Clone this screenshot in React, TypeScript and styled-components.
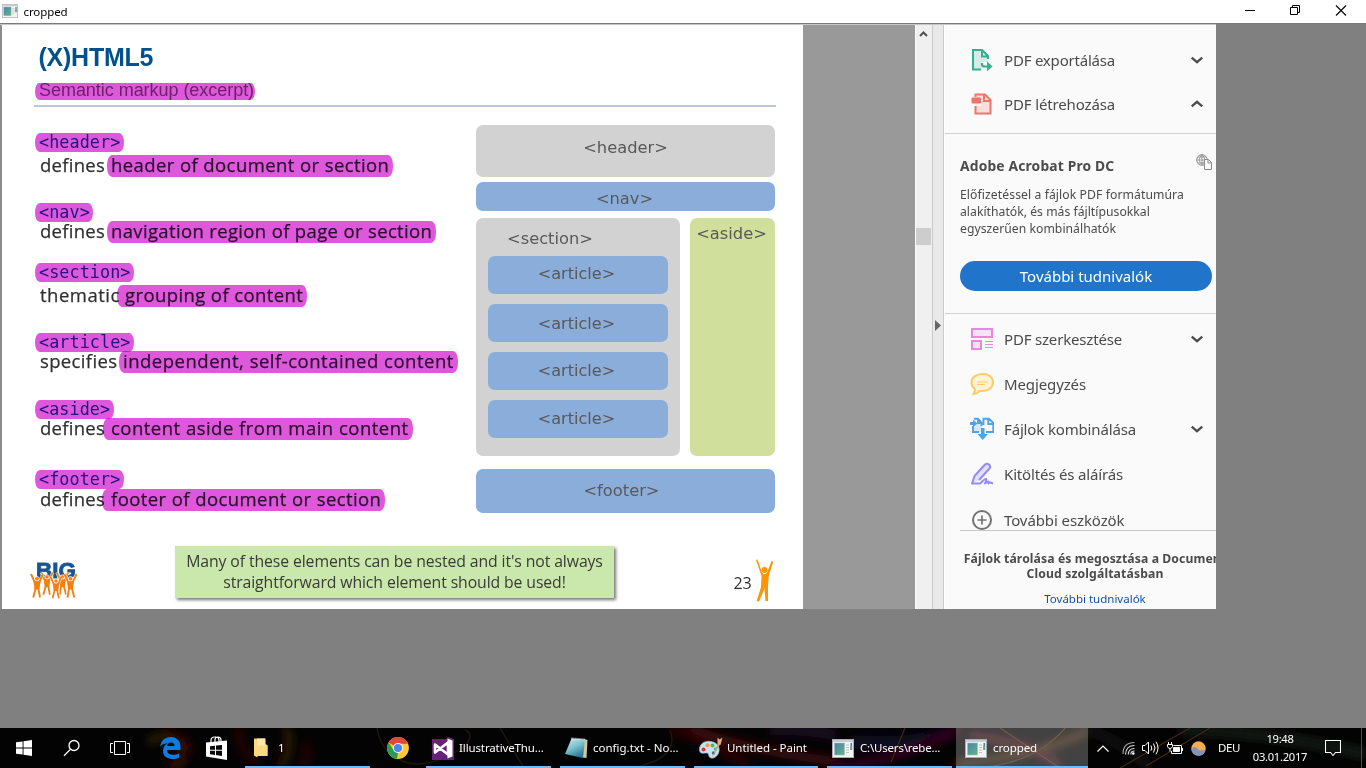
import React from "react";
import styled, { createGlobalStyle } from "styled-components";

const ui = `"Noto Sans", "Open Sans", sans-serif`;
const slideFont = `"Open Sans", "Noto Sans", sans-serif`;

const Global = createGlobalStyle`
  * { box-sizing: border-box; }
  body { margin: 0; width: 1366px; height: 768px; overflow: hidden; background: #808080; font-family: ${ui}; }
`;

const Screen = styled.div`
  width: 1366px; height: 768px; display: flex; flex-direction: column; overflow: hidden; background: #808080;
`;
const TitleBar = styled.header`
  height: 23px; flex: none; background: #fff; display: flex; align-items: center; padding-left: 2px;
  > svg { margin-top: -2px; }
`;
const Caption = styled.span`
  font: 11.5px/22px ${ui}; color: #000; margin-left: 5.5px; letter-spacing: -0.1px; white-space: nowrap;
`;
const WindowButtons = styled.div`
  margin-left: auto; display: flex; height: 23px; svg { width: 46px; height: 23px; display: block; }
`;
const Client = styled.main`
  flex: 1; border-top: 1px solid #7a7a7a; min-height: 0;
`;
const Doc = styled.div`
  width: 1216px; height: 585px; display: flex; border-top: 1px solid #c6c6c6; overflow: hidden;
`;
const Slide = styled.section`
  width: 803px; flex: none; background: #fff; border-left: 2px solid #8c8c8c; padding-left: 33px;
  display: flex; flex-direction: column; font-family: ${slideFont};
`;
const Backdrop = styled.div`width: 112px; flex: none; background: #999;`;
const Scrollbar = styled.div`
  width: 17px; flex: none; background: #f0f0f0; border-left: 1px solid #fbfbfb;
  display: flex; flex-direction: column; svg { display: block; }
`;
const Thumb = styled.div`height: 17px; margin-top: 187px; width: 15px; background: #cdcdcd;`;
const Splitter = styled.div`
  width: 12px; flex: none; background: #e9e9e9; border-left: 1px solid #cacaca; border-right: 1px solid #cacaca;
  display: flex; align-items: flex-start; padding: 295px 0 0 2px;
`;

const Title = styled.h1`
  margin: 17px 0 0 3.5px; font: bold 25px/30px "Liberation Sans", Arial, sans-serif; color: #00528f; letter-spacing: -0.25px; height: 31px;
`;
const Mark = styled.span<{ $w: number; $h: number; $lh?: number; $pl?: number; $ls?: number }>`
  display: block; flex: none; white-space: nowrap; width: ${p => p.$w}px; height: ${p => p.$h}px; line-height: ${p => p.$lh ?? p.$h - 2}px;
  padding-left: ${p => p.$pl ?? 4}px; letter-spacing: ${p => p.$ls ?? 0}px;
  background: #de58dc; border-radius: 5px / 10px; mix-blend-mode: multiply;
`;
const Subtitle = styled.div`
  margin-top: 10px; font: 18px/17px "Liberation Sans", Arial, sans-serif; color: #6b2367;
`;
const Rule = styled.div`width: 742px; height: 2px; margin: 5px 0 0 -1px; background: #bcc8d6;`;
const Body = styled.div`display: flex; height: 412px; flex: none;`;
const Terms = styled.div`width: 441px; flex: none; padding-top: 26px; display: flex; flex-direction: column;`;
const Term = styled.div<{ $h: number; $gap: number }>`
  height: ${p => p.$h}px; flex: none; display: flex; flex-direction: column; gap: ${p => p.$gap}px;
`;
const Tag = styled.div`
  height: 18px; font: 16.8px/18px "DejaVu Sans Mono", monospace; color: #23127f;
`;
const Desc = styled.div`
  display: flex; height: 22px; font-size: 18.5px; color: #2a0f2c; padding-left: 5px; -webkit-text-stroke: 0.25px;
`;
const Plain = styled.span<{ $w: number; $ls: number }>`
  flex: none; width: ${p => p.$w}px; line-height: 20px; color: #303030; white-space: nowrap; letter-spacing: ${p => p.$ls}px;
`;

const Diagram = styled.div`
  width: 299px; flex: none; padding-top: 18px; font: 16.3px/20px "DejaVu Sans", Verdana, sans-serif; color: #595959;
`;
const tones = { grey: "#d2d2d2", blue: "#8badd9", green: "#d0df9b" };
const Block = styled.div<{ $tone: keyof typeof tones; $h: number; $pt: number; $mt?: number; $w?: number; $pr?: number }>`
  background: ${p => tones[p.$tone]}; height: ${p => p.$h}px; padding: ${p => p.$pt}px ${p => p.$pr ?? 0}px 0 0; margin-top: ${p => p.$mt ?? 0}px;
  ${p => p.$w ? `width: ${p.$w}px;` : ""}
  border-radius: 7px; text-align: center; flex: none;
`;
const Columns = styled.div`display: flex; gap: 10px; margin-top: 7px;`;
const SectionLabel = styled.div`height: 20px; padding-right: 56px;`;
const Articles = styled.div`display: flex; flex-direction: column; gap: 10px; padding: 7px 12px 0; font-size: 16.1px;`;

const SlideFooter = styled.footer`display: flex; align-items: flex-start; height: 66px;`;
const LogoBox = styled.div`width: 47px; margin: 40px 0 0 -5px; flex: none; svg { display: block; }`;
const Callout = styled.div`
  width: 439px; height: 52px; margin: 27px 0 0 98px; padding-top: 5px; flex: none; background: #cae8ab; box-shadow: 2px 2px 3px #777;
  color: #3a3a3a; font-size: 15.8px; line-height: 21px; text-align: center; white-space: nowrap; letter-spacing: -0.11px;
`;
const PageNo = styled.div`
  font-size: 16px; line-height: 20px; color: #303030; margin: 54px 0 0 119.5px; width: 21.5px; flex: none; letter-spacing: -0.2px;
`;
const Mascot = styled.svg`display: block; margin-top: 40px; flex: none;`;

const Panel = styled.aside`
  flex: 1; background: #fafafa; border-left: 1px solid #fff; min-width: 0; overflow: hidden; color: #4b4b4b;
`;
const ToolRow = styled.div<{ $h: number }>`
  height: ${p => p.$h}px; display: flex; align-items: center; padding-left: 25px;
  > svg { flex: none; display: block; }
`;
const ToolName = styled.span<{ $ls: number }>`
  font-size: 15px; line-height: 20px; width: 187px; margin-left: 10px; white-space: nowrap; letter-spacing: ${p => p.$ls}px;
`;
const ToolGroup = styled.div<{ $pt: number; $h: number; $line?: boolean }>`
  padding-top: ${p => p.$pt}px; height: ${p => p.$h}px; border-bottom: ${p => p.$line ? "1px solid #d0d0d0" : "0"};
`;
const Promo = styled.div`height: 180px; padding: 22px 0 0 15px; border-bottom: 1px solid #d0d0d0;`;
const PromoHead = styled.div`
  display: flex; height: 20px; svg { margin-top: -2px; }
  b { font-size: 13.8px; line-height: 20px; width: 236px; white-space: nowrap; letter-spacing: 0.18px; }
`;
const PromoText = styled.p`margin: 10px 0 0; font-size: 12.2px; line-height: 17px; white-space: nowrap; height: 51px;`;
const PromoLine = styled.span<{ $ls: number }>`display: block; letter-spacing: ${p => p.$ls}px;`;
const Button = styled.button`
  display: block; margin: 24px 0 0; width: 252px; height: 30px; border: 0; border-radius: 15px; background: #2074ca; color: #fff;
  font: 15px/28px ${ui}; padding: 0;
`;
const Cloud = styled.div`
  margin-left: 15px; width: 270px; border-top: 1px solid #c8c8c8; padding-top: 20px; text-align: center; white-space: nowrap;
  font-size: 12.2px; line-height: 15px; font-weight: bold; position: relative;
`;
const CloudLine = styled.div<{ $ls: number }>`letter-spacing: ${p => p.$ls}px;`;
const CloudLink = styled.a`display: block; margin-top: 10px; font-size: 11.5px; font-weight: normal; color: #0d54a5;`;

const Taskbar = styled.nav`
  height: 40px; flex: none; display: flex; position: relative; color: #fff; overflow: hidden; background: #040303;
`;
const WallpaperLayer = styled.svg`position: absolute; inset: 0; width: 1366px; height: 40px;`;
const Slot = styled.div<{ $w: number }>`
  width: ${p => p.$w}px; flex: none; display: flex; align-items: center; justify-content: center; position: relative; height: 40px;
  svg { display: block; }
`;
const Task = styled.div<{ $w: number; $ml?: number; $active?: boolean; $pl?: number; $gap?: number }>`
  width: ${p => p.$w}px; margin-left: ${p => p.$ml ?? 0}px; padding: 2px 0 0 ${p => p.$pl ?? 5}px; flex: none; height: 40px; position: relative;
  border-bottom: 2px solid #76b9ed; display: flex; align-items: center; gap: ${p => p.$gap ?? 5}px;
  background: ${p => p.$active ? "rgba(255,255,255,.25)" : "transparent"};
  svg { display: block; flex: none; }
`;
const TaskLabel = styled.span<{ $ls?: number }>`
  font-size: 11.5px; line-height: 20px; white-space: nowrap; letter-spacing: ${p => p.$ls ?? -0.08}px;
`;
const Clock = styled.div`
  width: 64px; flex: none; text-align: center; font-size: 11.2px; line-height: 18px; padding-top: 2px; position: relative; letter-spacing: -0.28px;
`;
const ShowDesktop = styled.div`width: 1px; height: 40px; margin-left: 7px; background: #4c4c4c; position: relative;`;

const AppIcon = ({ w = 22, h = 19 }: { w?: number; h?: number }) => (
  <svg width={w} height={h} viewBox="0 0 22 19">
    <defs><linearGradient id="scr" x1="0" y1="0" x2="1" y2="1"><stop offset="0" stopColor="#4b82b4" /><stop offset="1" stopColor="#62b57e" /></linearGradient></defs>
    <rect x=".5" y=".5" width="21" height="18" fill="#f4f4f4" stroke="#a9adb1" />
    <rect x="1" y="1" width="20" height="2" fill="#c9ced4" />
    <rect x="2.5" y="4" width="10" height="12" fill="url(#scr)" stroke="#a9b8bd" strokeWidth=".6" />
    <path d="M14 6h3M14 8.500h3M14 11h3M14 13.500h3" stroke="#c0c0c0" />
    <rect x="18.500" y="4" width="1.600" height="7" fill="#4a78b8" /><rect x="18.500" y="7" width="1.600" height="4" fill="#5fb06f" />
  </svg>
);
const Chevron = ({ up }: { up?: boolean }) => (
  <svg width="12" height="8" viewBox="0 0 12 8"><path d={up ? "M.7 6.300 6 1.800 11.300 6.300" : "M.7 1.700 6 6.200 11.300 1.700"} fill="none" stroke="#4b4b4b" strokeWidth="2.300" /></svg>
);
const ExportIcon = () => (
  <svg width="24" height="24" viewBox="0 0 24 24"><path d="M3 2h9.500l6 6v6H12v8H3z" fill="#d5ece6" /><path d="M18 11V8l-6-6H3v19.500h8M12 2v6.500h6" fill="none" stroke="#35ae92" strokeWidth="2" /><path d="M12 15v1.500q0 2 3 2h2.500" fill="none" stroke="#35ae92" strokeWidth="2.200" /><path d="M17 13.500l5.500 5-5.500 4.700z" fill="#35ae92" /></svg>
);
const CreateIcon = () => (
  <svg width="24" height="24" viewBox="0 0 24 24"><path d="M6 2.500h9.500L21 8v13.500H6z" fill="#f8dedb" /><path d="M5.500 5V2.500h9.500L20.500 8v13.500h-15V14M14 2.500V9h6.500" fill="none" stroke="#ef756b" strokeWidth="2" /><rect x="6.600" y="11" width="5" height="3" fill="#fafafa" /><rect x="1.500" y="5.500" width="9.500" height="6" rx="1" fill="#ef756b" /></svg>
);
const EditIcon = () => (
  <svg width="24" height="24" viewBox="0 0 24 24" fill="#f8e0f5" stroke="#ec86dc"><rect x="2" y="2" width="20" height="8" strokeWidth="2" /><rect x="2" y="14" width="9" height="8" strokeWidth="2" /><path d="M15 14.500h8M15 17.500h8M15 20.500h8" strokeWidth="1" /></svg>
);
const CommentIcon = () => (
  <svg width="24" height="24" viewBox="0 0 24 24"><path d="M12.500 2C6 2 1.500 5.500 1.500 10.500c0 3 1.500 5 3.500 6.500 0 2-.7 3.500-1.500 5 2.500-.3 5-1.500 6-3 8 .8 13.500-3 13.500-8.500S18.500 2 12.500 2z" fill="#fff3d3" stroke="#fdcb6a" strokeWidth="2" /><path d="M7 10h11M7 12.500h8" stroke="#fdcb6a" /></svg>
);
const CombineIcon = () => (
  <svg width="24" height="24" viewBox="0 0 24 24"><path d="M4 6h8v9H4z" fill="#d4e8f9" /><path d="M3 9v6h6M4 1.700h4l3.500 4V9M8 2v4h4M13.500 8V1.700h5.500L23.300 6v9H16M18.300 2v5h5" fill="none" stroke="#4fa3e6" strokeWidth="1.900" /><path d="M0 5h3V2.500L7.500 6.500 3 10V8H0zM11 11h3.500v6H18L12.700 23 7.500 17H11z" fill="#4fa3e6" /></svg>
);
const SignIcon = () => (
  <svg width="24" height="24" viewBox="0 0 24 24"><path d="M2 21.500 4.500 14 14.500 2.800q2-1.800 4 0 2 2 .5 4L9.500 18z" fill="#e3defd" /><path d="M9 18 19.500 6.500q1.500-2-.5-4-2-1.500-4 0L4.500 14 2 21.500h8q5-5 6-4.500t-1 4.500q3-2.500 3.500-2t0 2q2-1.500 2.500-1t2 1" fill="none" stroke="#958cf3" strokeWidth="2" strokeLinejoin="round" /></svg>
);
const MoreIcon = () => (
  <svg width="24" height="24" viewBox="0 0 24 24" fill="none" stroke="#737373"><circle cx="12" cy="12" r="9" strokeWidth="2" /><path d="M7.500 12h9M12 7.500v9" strokeWidth="1.700" /></svg>
);
const GlobeDoc = () => (
  <svg width="16" height="16" viewBox="0 0 16 16" fill="none" stroke="#8b8b8b" strokeWidth="1"><circle cx="6" cy="6" r="5.300" /><path d="M.7 6h10.500M2 3h8M2 9h6M6 .7v10M6 .7q-5.500 5 0 10M6 .7q5.500 5 0 10" strokeWidth=".8" /><path d="M8.500 5.500h4l3 3v7h-7z" fill="#fafafa" /><path d="M12 5.500v3.500h3.500" /></svg>
);

const Person = ({ x, y, s, color = "#f57f17" }: { x: number; y: number; s: number; color?: string }) => (
  <g transform={`translate(${x} ${y}) scale(${s})`} fill={color}><circle cx="8.500" cy="11" r="3" /><path d="M0 1 1.500.5 6 13.500Q8.500 17 11 13.500L15.500 2l1.700.8L12.800 17l-.8 10.500L12 42h-2.500L8.500 29.500 3 42.500.7 42 5 28 5.500 17z" /></g>
);
const Fan = ({ x, y, s = 1, flip }: { x: number; y: number; s?: number; flip?: boolean }) => (
  <g transform={`translate(${x} ${y}) scale(${flip ? -s : s} ${s})`}>
    <path d="M-6-9-2.500-1 2.500-1 6-9M-1.500 5-4 14.500M1.500 5 3.500 14.500" fill="none" stroke="#fff" strokeWidth="3.200" opacity=".7" />
    <path d="M-6-9-2.300-1M6-9 2.300-1M-1.300 5-3.800 14.500M1.300 5 3 14.500" fill="none" stroke="#f58011" strokeWidth="1.900" />
    <path d="M-3.600-2h7.200L2.400 6.500h-4.800z" fill="#f58011" />
    <circle cx="0" cy="-4.300" r="2.200" fill="#f58011" stroke="#fff" strokeWidth=".7" />
  </g>
);
const BigLogo = () => (
  <svg width="47" height="40" viewBox="0 0 47 40">
    <text x="6" y="18.500" fontFamily="Liberation Sans" fontWeight="bold" fontSize="21.500" textLength="40" lengthAdjust="spacingAndGlyphs" fill="#1a5591" stroke="#1a5591" strokeWidth=".8">BIG</text>
    <Fan x={17} y={22} s={.95} /><Fan x={32.500} y={22} s={.95} flip />
    <Fan x={7} y={24} /><Fan x={40.500} y={24} flip /><Fan x={26} y={26} s={.92} />
  </svg>
);

const StartIcon = () => (
  <svg width="16" height="16" viewBox="0 0 16 16" fill="#fff"><path d="M0 2.300 6.600 1.400v6.200H0zM7.500 1.200 16 0v7.600H7.500zM0 8.400h6.600v6.200L0 13.700zM7.500 8.400H16V16l-8.500-1.200z" /></svg>
);
const SearchIcon = () => (
  <svg width="18" height="18" viewBox="0 0 18 18" fill="none" stroke="#fff" strokeWidth="1.300"><circle cx="11" cy="6.500" r="5" /><path d="M7.500 10.200 1 16.700" /></svg>
);
const TaskViewIcon = () => (
  <svg width="20" height="14" viewBox="0 0 20 14" fill="none" stroke="#fff"><path d="M4.500.5h11v13h-11zM3 2.500H.5v9H3M17 2.500h2.500v9H17" /></svg>
);
const EdgeIcon = () => (
  <svg width="21" height="22" viewBox="0 0 21 22"><path d="M0 10C1 3.500 5 0 11 0c6 0 9.500 4.500 9.500 9.500V13H7c.2 3.500 3.200 4.800 6.200 4.800 2.300 0 4.300-.6 6-1.600v4.300C17.300 21.500 15 22 12.300 22 6 22 3 18.500 3 13.800c0-3.300 1.800-6 4.700-7.500C4.500 6.300 1.500 7.500 0 10zM7.200 9h7.300c0-2.300-1.200-3.600-3.500-3.600S7.500 6.800 7.200 9z" fill="#0f7bdc" /></svg>
);
const StoreIcon = () => (
  <svg width="22" height="24" viewBox="0 0 22 24"><path d="M5 7V4q0-2.500 3-3h2q3 .5 3 3v2M9 6V3q.5-2 3-2 3 .3 3 3v1" fill="none" stroke="#fff" strokeWidth="1.200" /><path d="M0 6.500 21 4.500V24L0 20.500z" fill="#fff" /><path d="M4 10.300l5-.6V13.800H4zM10 9.600l6-.7v4.900h-6zM4 14.800h5v4.200l-5-.7zM10 14.800h6v5.100l-6-.8z" fill="#0a0a0a" /></svg>
);
const FolderIcon = () => (
  <svg width="15" height="20" viewBox="0 0 15 20"><path d="M1 .5h11V6l2.500 1v10.500H1z" fill="#f2c75c" /><path d="M4 .5h8.500v12.500H4z" fill="#ffe9a6" /><path d="M1 .5 4.500 3v16.500L1 17.500zM4.500 7.500h10v10.500h-10z" fill="#fbd980" /></svg>
);
const ChromeIcon = () => (
  <svg width="22" height="22" viewBox="0 0 22 22"><circle cx="11" cy="11" r="10.900" fill="#fcc934" /><path d="M11 11 1.560 5.550A10.900 10.900 0 0 1 20.440 5.550L20.800 6.200H11z" fill="#e0483a" /><path d="M1.560 5.550 6.800 13.300 11 15.800 10 21.850A10.900 10.900 0 0 1 1.560 5.550z" fill="#2c9b52" /><path d="M11 6.200h9.800" stroke="#e0483a" /><circle cx="11" cy="11" r="5" fill="#fff" /><circle cx="11" cy="11" r="4.100" fill="#4a86ec" /></svg>
);
const VsIcon = () => (
  <svg width="22" height="23" viewBox="0 0 22 23"><path d="M0 2h14l2-2 6 2v21H0z" fill="#68217a" /><path d="M3 7.500 16 17.500V5.500L3 15.500z" fill="none" stroke="#fff" strokeWidth="2.600" strokeLinejoin="round" /><path d="m15.500 1.500 5 2v16l-5 2z" fill="#fff" /></svg>
);
const NotepadIcon = () => (
  <svg width="23" height="22" viewBox="0 0 23 22"><defs><linearGradient id="np" x1="0" y1="0" x2=".5" y2="1"><stop offset="0" stopColor="#d4eff5" /><stop offset=".55" stopColor="#79bfcd" /><stop offset="1" stopColor="#287d93" /></linearGradient></defs><path d="m19 2 3.500 1-1 18-4-.5z" fill="#d6c69b" /><path d="M6.500 1.500 20 2.500 18 21 0 17z" fill="url(#np)" /><path d="M6.500 1.500 20 2.500" stroke="#e5eced" strokeWidth="2" strokeDasharray="1 1" /></svg>
);
const PaintIcon = () => (
  <svg width="24" height="23" viewBox="0 0 24 23"><path d="M.5 13C0 7 6 3 12 4.500c6 1 9 5 8 10s-6 8-9 6c-2-1.500-.5-4-3-4.500C5 15.500 1 18 .5 13z" fill="#c9e3f3" stroke="#8bb4cf" strokeWidth=".7" /><circle cx="4.500" cy="12.500" r="2" fill="#cf3c2d" /><circle cx="8.500" cy="8.300" r="2" fill="#e9a137" /><circle cx="13.500" cy="8.500" r="2" fill="#61b244" /><circle cx="16.500" cy="12" r="1.800" fill="#47aee0" /><circle cx="14.500" cy="16" r="1.800" fill="#4268ae" /><path d="M12 22.500 19 6.500l2 1z" fill="#e99a3e" /><path d="M18.500 7.500 18.500.5l2 2 3-2L21.500 8z" fill="#d9ad7c" /></svg>
);
const TrayChevron = () => <svg width="12" height="7" viewBox="0 0 12 7"><path d="M.5 6.500 6 1l5.500 5.500" fill="none" stroke="#fff" strokeWidth="1.200" /></svg>;
const WifiIcon = () => (
  <svg width="13" height="14" viewBox="0 0 13 14" fill="none" stroke="#ddd" strokeWidth="1.100"><path d="M1 13Q1 1.500 12.500 1.500" opacity=".75" /><path d="M3.500 13.500Q4 4.500 12.500 4.500M6.300 13.500Q6.500 7.500 12.500 7.500M8.800 13.500q0-3.500 3.700-3.500" /><circle cx="11.300" cy="12.500" r="1.300" fill="#fff" stroke="none" /></svg>
);
const SpeakerIcon = () => (
  <svg width="17" height="14" viewBox="0 0 17 14" fill="none" stroke="#fff"><path d="M.5 4.500H3l3.500-3.500v12L3 9.500H.5zM9 4.500q1.500 2.500 0 5M11.500 2.500q3 4.500 0 9M14 .7q4 6.300 0 12.600" /></svg>
);
const BatteryIcon = () => (
  <svg width="16" height="13" viewBox="0 0 16 13" fill="none" stroke="#fff"><path d="M6.500 3.500h8v8h-10V9M15.500 6v3M1.500 0v3M4.500 0v3M.5 2.500h5v2q-.5 2-2.500 2t-2.500-2zM3 6.500v3" /><path d="M6.500 5.500h6v4h-6z" fill="#fff" /></svg>
);
const WeatherIcon = () => (
  <svg width="15" height="15" viewBox="0 0 15 15"><circle cx="7.500" cy="7.500" r="7.200" fill="#f4ae4d" /><path d="M.4 8.500Q2.500 5 5.500 6.500q2 3.500 5 2.800 2.500-.8 4 .2A7.200 7.200 0 0 1 .4 8.500z" fill="#8792b8" /></svg>
);
const NoticeIcon = () => <svg width="16" height="17" viewBox="0 0 16 17"><path d="M.5.500h15v12h-5l-2.500 3-2.500-3h-5z" fill="none" stroke="#fff" strokeWidth="1.100" /></svg>;

const Wallpaper = () => (
  <WallpaperLayer viewBox="0 0 1366 40" fill="none">
    <defs><filter id="soft" x="-20%" y="-50%" width="140%" height="200%"><feGaussianBlur stdDeviation="4" /></filter></defs>
    <g filter="url(#soft)">
      <path d="M148 14q22-12 32 2t-8 24" stroke="#2e2205" strokeWidth="7" />
      <path d="M165 3q28 12 22 20t-18 14" stroke="#360404" strokeWidth="6" />
      <path d="M240 0q-5 22 20 35M285 0q8 22-8 40M300 40q14-20 2-22" stroke="#2a0505" strokeWidth="7" />
      <path d="M287 0q8 20-6 40" stroke="#2b2105" strokeWidth="5" />
      <path d="M670 0q50 16 80 40" stroke="#2c0505" strokeWidth="10" /><path d="M690 0q60 24 150 34" stroke="#3a070a" strokeWidth="9" />
      <path d="M770 2q50 0 66 6" stroke="#1e0c22" strokeWidth="10" /><path d="M850 14q60 4 100-8" stroke="#0c0722" strokeWidth="14" />
      <path d="M830 40q70-6 130-40" stroke="#35061f" strokeWidth="8" />
      <path d="M956 36q80-8 130-32" stroke="#4a2b0c" strokeWidth="6" /><path d="M970 8q60 6 90 30" stroke="#3d0f14" strokeWidth="9" />
      <path d="M1084 0q40 14 66 40" stroke="#1e1e1e" strokeWidth="5" /><path d="M1180 2q80 0 186 24" stroke="#161a18" strokeWidth="10" />
    </g>
    <path d="M377 0q4 26 28 34t60-16q10-12 0-16M500 0l24 40M640 38q40-10 30-36" stroke="#1f1706" strokeWidth="1.500" />
    <path d="M905 0l-14 34M1120 40l70-40M1146 38l64-38M975 40q60-4 90-40M1000 0l60 40" stroke="#3f2810" strokeWidth="1.200" />
  </WallpaperLayer>
);

const terms = [
  { tag: "<header>", tw: 89, h: 70, gap: 4, plain: "defines", pls: 0.28, pw: 67, pl: 4, text: "header of document or section", w: 286, ls: 0.41 },
  { tag: "<nav>", tw: 58, h: 60, gap: 0, plain: "defines", pls: 0.28, pw: 67, pl: 4, text: "navigation region of page or section", w: 329, ls: 0.35 },
  { tag: "<section>", tw: 99, h: 70, gap: 4, plain: "thematic", pls: 0.5, pw: 77, pl: 8, text: "grouping of content", w: 190, ls: 0.4 },
  { tag: "<article>", tw: 99, h: 67, gap: 0, plain: "specifies", pls: 0.35, pw: 79, pl: 4, text: "independent, self-contained content", w: 339, ls: 0.51 },
  { tag: "<aside>", tw: 79, h: 70, gap: 0, plain: "defines", pls: 0.28, pw: 63, pl: 8, text: "content aside from main content", w: 310, ls: 0.48 },
  { tag: "<footer>", tw: 89, h: 50, gap: 1, plain: "defines", pls: 0.28, pw: 62, pl: 9, text: "footer of document or section", w: 283, ls: 0.42 },
];

export default function App() {
  return (
    <Screen>
      <Global />
      <TitleBar>
        <AppIcon w={16} h={14} /><Caption>cropped</Caption>
        <WindowButtons>
          <svg viewBox="0 0 46 23"><path d="M17 10.500h10" stroke="#000" /></svg>
          <svg viewBox="0 0 46 23" fill="none" stroke="#000"><path d="M16.500 7.500h7v7h-7zM18.500 7.500v-2h7v7h-2" /></svg>
          <svg viewBox="0 0 46 23"><path d="m16 5.500 10 10m0-10-10 10" stroke="#000" strokeWidth="1.100" /></svg>
        </WindowButtons>
      </TitleBar>
      <Client>
        <Doc>
          <Slide>
            <Title>(X)HTML5</Title>
            <Subtitle><Mark $w={220} $h={17} $ls={-0.04}>Semantic markup (excerpt)</Mark></Subtitle>
            <Rule />
            <Body>
              <Terms>
                {terms.map(t => (
                  <Term key={t.tag} $h={t.h} $gap={t.gap}>
                    <Tag><Mark $w={t.tw} $h={19} $lh={19} $ls={0.06}>{t.tag}</Mark></Tag>
                    <Desc>
                      <Plain $w={t.pw} $ls={t.pls}>{t.plain}</Plain>
                      <Mark $w={t.w} $h={22} $pl={t.pl} $ls={t.ls}>{t.text}</Mark>
                    </Desc>
                  </Term>
                ))}
              </Terms>
              <Diagram>
                <Block $tone="grey" $h={52} $pt={13}>{"<header>"}</Block>
                <Block $tone="blue" $h={29} $pt={7} $mt={5} $pr={2}>{"<nav>"}</Block>
                <Columns>
                  <Block $tone="grey" $h={238} $pt={11} $w={204}>
                    <SectionLabel>{"<section>"}</SectionLabel>
                    <Articles>
                      {[8, 10, 9, 9].map((pt, i) => <Block key={i} $tone="blue" $h={38} $pt={pt} $pr={3}>{"<article>"}</Block>)}
                    </Articles>
                  </Block>
                  <Block $tone="green" $h={238} $pt={6} $w={85} $pr={2}>{"<aside>"}</Block>
                </Columns>
                <Block $tone="blue" $h={44} $pt={12} $mt={13} $pr={8}>{"<footer>"}</Block>
              </Diagram>
            </Body>
            <SlideFooter>
              <LogoBox><BigLogo /></LogoBox>
              <Callout>
                <div>Many of these elements can be nested and it's not always</div>
                <div>straightforward which element should be used!</div>
              </Callout>
              <PageNo>23</PageNo>
              <Mascot width="20" height="44" viewBox="0 0 20 44"><Person x={1} y={0} s={1} color="#fb9704" /></Mascot>
            </SlideFooter>
          </Slide>
          <Backdrop />
          <Scrollbar>
            <svg width="16" height="16" viewBox="0 0 16 16"><path d="M4 11 7.500 7.500 11 11" fill="none" stroke="#505050" strokeWidth="2" /></svg>
            <Thumb />
          </Scrollbar>
          <Splitter><svg width="7" height="12" viewBox="0 0 7 12"><path d="M0 0v11l6-5.500z" fill="#666" /></svg></Splitter>
          <Panel>
            <ToolGroup $pt={13} $h={109} $line>
              <ToolRow $h={44}><ExportIcon /><ToolName $ls={-0.2}>PDF exportálása</ToolName><Chevron /></ToolRow>
              <ToolRow $h={44}><CreateIcon /><ToolName $ls={-0.14}>PDF létrehozása</ToolName><Chevron up /></ToolRow>
            </ToolGroup>
            <Promo>
              <PromoHead><b>Adobe Acrobat Pro DC</b><GlobeDoc /></PromoHead>
              <PromoText>
                <PromoLine $ls={0.08}>Előfizetéssel a fájlok PDF formátumúra</PromoLine>
                <PromoLine $ls={0.02}>alakíthatók, és más fájltípusokkal</PromoLine>
                <PromoLine $ls={0.03}>egyszerűen kombinálhatók</PromoLine>
              </PromoText>
              <Button>További tudnivalók</Button>
            </Promo>
            <ToolGroup $pt={2} $h={216}>
              <ToolRow $h={45}><EditIcon /><ToolName $ls={-0.18}>PDF szerkesztése</ToolName><Chevron /></ToolRow>
              <ToolRow $h={45}><CommentIcon /><ToolName $ls={-0.12}>Megjegyzés</ToolName></ToolRow>
              <ToolRow $h={45}><CombineIcon /><ToolName $ls={-0.15}>Fájlok kombinálása</ToolName><Chevron /></ToolRow>
              <ToolRow $h={45}><SignIcon /><ToolName $ls={-0.16}>Kitöltés és aláírás</ToolName></ToolRow>
              <ToolRow $h={47}><MoreIcon /><ToolName $ls={-0.1}>További eszközök</ToolName></ToolRow>
            </ToolGroup>
            <Cloud>
              <CloudLine $ls={0.1}>Fájlok tárolása és megosztása a Document</CloudLine>
              <CloudLine $ls={0.14}>Cloud szolgáltatásban</CloudLine>
              <CloudLink>További tudnivalók</CloudLink>
            </Cloud>
          </Panel>
        </Doc>
      </Client>
      <Taskbar>
        <Wallpaper />
        <Slot $w={48}><StartIcon /></Slot>
        <Slot $w={48}><SearchIcon /></Slot>
        <Slot $w={48}><TaskViewIcon /></Slot>
        <Slot $w={52}><EdgeIcon /></Slot>
        <Slot $w={41}><StoreIcon /></Slot>
        <Task $w={125} $ml={8} $pl={8} $gap={10}><FolderIcon /><TaskLabel>1</TaskLabel></Task>
        <Slot $w={56}><ChromeIcon /></Slot>
        <Task $w={125} $pl={6}><VsIcon /><TaskLabel $ls={-0.12}>IllustrativeThu...</TaskLabel></Task>
        <Task $w={125} $ml={9}><NotepadIcon /><TaskLabel $ls={0}>config.txt - No...</TaskLabel></Task>
        <Task $w={124} $ml={9} $gap={4}><PaintIcon /><TaskLabel $ls={-0.04}>Untitled - Paint</TaskLabel></Task>
        <Task $w={125} $ml={9} $gap={6}><AppIcon /><TaskLabel $ls={-0.2}>{"C:\\Users\\rebe..."}</TaskLabel></Task>
        <Task $w={132} $ml={4} $pl={9} $gap={6} $active><AppIcon /><TaskLabel $ls={-0.1}>cropped</TaskLabel></Task>
        <Slot $w={30}><TrayChevron /></Slot>
        <Slot $w={20}><WifiIcon /></Slot>
        <Slot $w={25}><SpeakerIcon /></Slot>
        <Slot $w={24}><BatteryIcon /></Slot>
        <Slot $w={23}><WeatherIcon /></Slot>
        <Slot $w={38}><TaskLabel $ls={-0.4}>DEU</TaskLabel></Slot>
        <Clock><div>19:48</div><div>03.01.2017</div></Clock>
        <Slot $w={42}><NoticeIcon /></Slot>
        <ShowDesktop />
      </Taskbar>
    </Screen>
  );
}
